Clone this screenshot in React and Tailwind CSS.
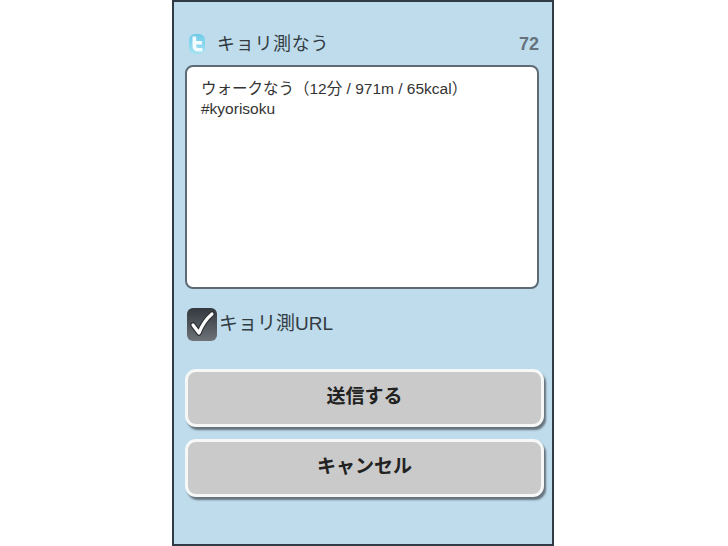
const cjk = 'font-["Liberation_Sans","Noto_Sans_CJK_JP",sans-serif]';

function TwitterBird() {
  return (
    <svg className="ml-[3px] h-[22px] w-[18px]" viewBox="0 0 18 22" aria-hidden="true">
      <defs>
        <linearGradient id="bird" x1="0" y1="0" x2="0" y2="1">
          <stop offset="0" stopColor="#6fcbe8" />
          <stop offset="1" stopColor="#a5e2f2" />
        </linearGradient>
      </defs>
      <rect x="1" y="1" width="16" height="20" rx="6" fill="url(#bird)" />
      <path d="M4.5 3.5V13C4.5 16.5 7 18.5 10 18.5H14.5V15H10.5C9 15 8.2 14.2 8.2 13V11.5H14V8H8.2V3.5Z" fill="#f2fbfd" />
    </svg>
  );
}

function CheckMark() {
  return (
    <svg className="h-[28px] w-[28px]" viewBox="0 0 28 28" fill="none" aria-hidden="true">
      <path d="M5 15L11 23C14 15 18 9 24 4" stroke="#2a2f33" strokeWidth="5.5" strokeLinecap="round" strokeLinejoin="round" />
      <path d="M5 15L11 23C14 15 18 9 24 4" stroke="#ffffff" strokeWidth="3.2" strokeLinecap="round" strokeLinejoin="round" />
    </svg>
  );
}

function ActionButton({ children }) {
  return (
    <button
      type="button"
      className="flex h-[58px] w-full items-center justify-center rounded-[11px] border-[3px] border-[#f6f8f8] bg-[#cacaca] pb-[1px] text-[19px] font-bold text-[#222] shadow-[2px_3px_2px_#66737d]"
    >
      {children}
    </button>
  );
}

export default function App() {
  return (
    <div className={`flex h-[546px] w-[728px] bg-white pl-[172px] ${cjk}`}>
      <div className="flex h-[546px] w-[382px] flex-col border-2 border-[#2f3c46] bg-[#bedcec] pl-[11px] pr-[8px] pt-[28px]">
        <div className="mr-[5px] flex h-[28px] items-center">
          <TwitterBird />
          <span className="ml-[11px] text-[18px] leading-none tracking-[0.7px] text-[#333b42]">キョリ測なう</span>
          <span className="ml-auto text-[18px] font-bold text-[#66727c]">72</span>
        </div>

        <div className="mr-[5px] mt-[7px] h-[224px] rounded-[8px] border-2 border-[#5e6b75] bg-white px-[14px] pt-[12px] text-[15.5px] leading-[20px] text-[#333]">
          <p>ウォークなう（12分 / 971m / 65kcal）</p>
          <p>#kyorisoku</p>
        </div>

        <div className="mt-[17px] flex h-[36px] items-center">
          <span className="ml-[2px] flex h-[33px] w-[30px] items-center justify-center rounded-[6px] bg-gradient-to-b from-[#33393e] to-[#6d7378]">
            <CheckMark />
          </span>
          <span className="ml-[2px] text-[19px] text-[#333b42]">キョリ測URL</span>
        </div>

        <div className="mt-[27px] flex flex-col gap-[12px]">
          <ActionButton>送信する</ActionButton>
          <ActionButton>キャンセル</ActionButton>
        </div>
      </div>
    </div>
  );
}
